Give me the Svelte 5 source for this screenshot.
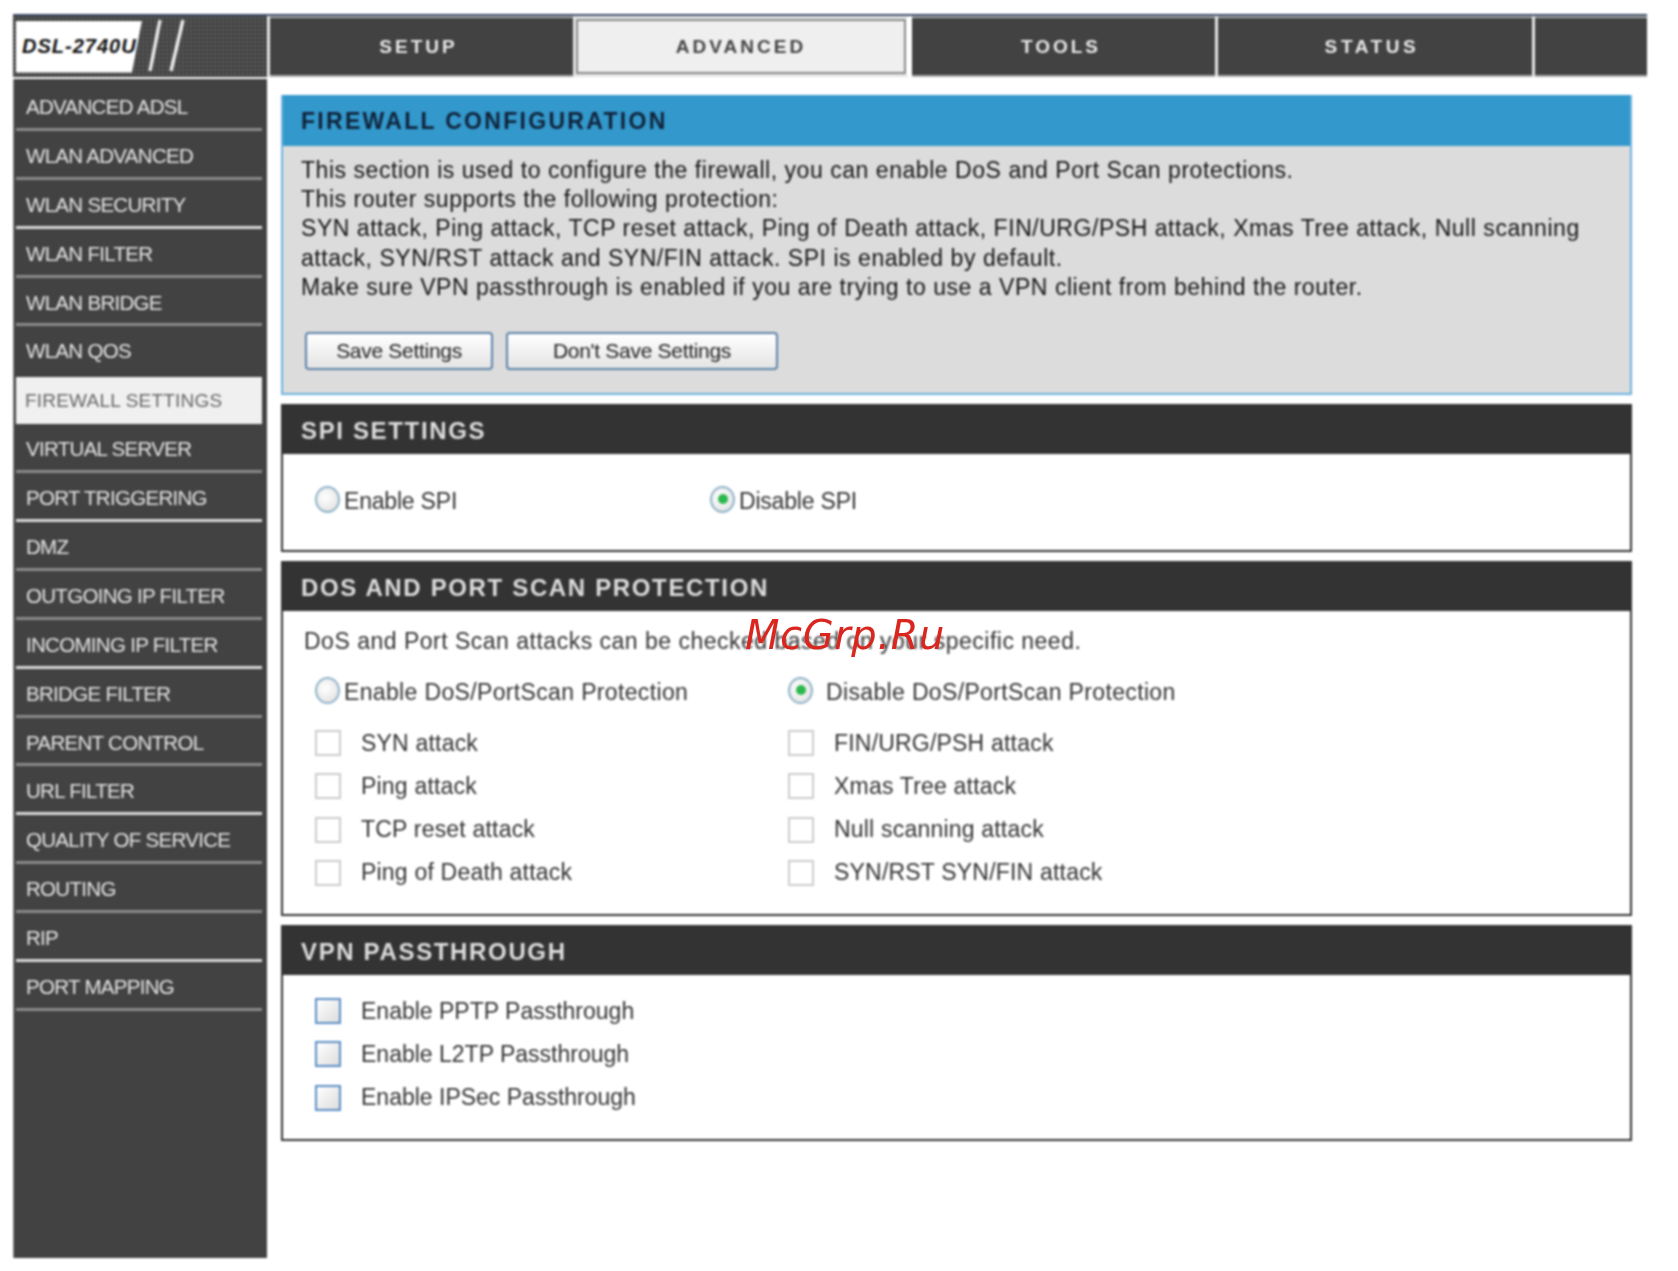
<script>
  const tabs = [
    { label: 'SETUP', cls: 't-setup' },
    { label: 'ADVANCED', cls: 't-adv', active: true },
    { label: 'TOOLS', cls: 't-tools' },
    { label: 'STATUS', cls: 't-status' },
    { label: '', cls: 't-end' }
  ];
  const menu = ['ADVANCED ADSL','WLAN ADVANCED','WLAN SECURITY','WLAN FILTER','WLAN BRIDGE','WLAN QOS','FIREWALL SETTINGS','VIRTUAL SERVER','PORT TRIGGERING','DMZ','OUTGOING IP FILTER','INCOMING IP FILTER','BRIDGE FILTER','PARENT CONTROL','URL FILTER','QUALITY OF SERVICE','ROUTING','RIP','PORT MAPPING'];
  const attacks = [
    ['SYN attack','FIN/URG/PSH attack'],
    ['Ping attack','Xmas Tree attack'],
    ['TCP reset attack','Null scanning attack'],
    ['Ping of Death attack','SYN/RST SYN/FIN attack']
  ];
  const vpn = ['Enable PPTP Passthrough','Enable L2TP Passthrough','Enable IPSec Passthrough'];
</script>

<div class="shell">
  <div class="page">
    <header class="top">
      <div class="logo">
        <span class="model">DSL-2740U</span>
        <svg class="slashes" width="56" height="56" viewBox="0 0 56 56" aria-hidden="true">
          <path d="M16 1 L6 52 M39 1 L27 52" stroke="#ececec" stroke-width="3.4" fill="none"/>
        </svg>
      </div>
      {#each tabs as t}
        <div class="tab {t.cls}" class:active={t.active}>{t.label}</div>
      {/each}
    </header>

    <div class="main">
      <nav class="side">
        {#each menu as m}
          <div class="item" class:sel={m === 'FIREWALL SETTINGS'}>{m}</div>
        {/each}
      </nav>

      <main class="content">
        <section class="box intro">
          <h2 class="bluehead">FIREWALL CONFIGURATION</h2>
          <div class="introbody">
            <p>This section is used to configure the firewall, you can enable DoS and Port Scan protections.</p>
            <p>This router supports the following protection:</p>
            <p>SYN attack, Ping attack, TCP reset attack, Ping of Death attack, FIN/URG/PSH attack, Xmas Tree attack, Null scanning<br>attack, SYN/RST attack and SYN/FIN attack. SPI is enabled by default.</p>
            <p>Make sure VPN passthrough is enabled if you are trying to use a VPN client from behind the router.</p>
            <div class="btns">
              <button class="b1">Save Settings</button>
              <button class="b2">Don't Save Settings</button>
            </div>
          </div>
        </section>

        <section class="box spi">
          <h2 class="darkhead">SPI SETTINGS</h2>
          <div class="spirow">
            <label class="opt o1"><span class="radio"></span>Enable SPI</label>
            <label class="opt"><span class="radio on"></span>Disable SPI</label>
          </div>
        </section>

        <section class="box dos">
          <h2 class="darkhead">DOS AND PORT SCAN PROTECTION</h2>
          <p class="lead">DoS and Port Scan attacks can be checked based on your specific need.</p>
          <div class="grid radios">
            <label class="opt wide"><span class="radio"></span>Enable DoS/PortScan Protection</label>
            <label class="opt wide o-dis"><span class="radio on"></span>Disable DoS/PortScan Protection</label>
          </div>
          <div class="grid checks">
            {#each attacks as row}
              {#each row as a}
                <label class="chk"><span class="box-c"></span>{a}</label>
              {/each}
            {/each}
          </div>
        </section>

        <section class="box vpn">
          <h2 class="darkhead">VPN PASSTHROUGH</h2>
          <div class="vpnlist">
            {#each vpn as v}
              <label class="chk"><span class="box-c blue"></span>{v}</label>
            {/each}
          </div>
        </section>
      </main>
    </div>
  </div>
  <div class="mark">McGrp.Ru</div>
</div>

<style>
  :global(body) { margin: 0; background: #fff; }
  .shell { position: relative; width: 1678px; height: 1271px; overflow: hidden; font-family: "Liberation Sans", Arial, sans-serif; }
  .page { padding: 14px 31px 0 13px; filter: blur(0.8px); color: #222; }

  .top { display: flex; height: 63px; background: #424242; border-top: 2px solid #3c4a66; box-sizing: border-box; box-shadow: inset 0 2px 0 #aaa, inset 0 -2px 0 #aaa; }
  .logo { position: relative; width: 254px; flex: none; display: flex; align-items: center; padding: 4px 0 4px 3px; box-sizing: border-box;
    background-image: radial-gradient(#666 1px, transparent 1.2px); background-size: 4px 4px; background-color: #424242; }
  .model { display: flex; align-items: center; width: 126px; height: 52px; padding-left: 6px; box-sizing: border-box; background: #fff; color: #111; font: italic bold 20px "Liberation Sans", sans-serif; letter-spacing: 1px; white-space: nowrap;
    clip-path: polygon(0 0, 100% 0, 92% 100%, 0 100%); }
  .slashes { margin-left: 2px; }
  .tab { border-left: 3px solid #e6e6e6; display: flex; align-items: center; justify-content: center; color: #e8e8e8; font-size: 19px; font-weight: 700; letter-spacing: 3px; box-sizing: border-box; flex: none; }
  .t-setup { width: 306px; padding-right: 6px; }
  .t-adv { width: 336px; background: #efefef; color: #444; border: 3px solid #e6e6e6; border-right-color: #fff; box-shadow: inset 0 0 0 2px #888; }
  .t-tools { width: 306px; border-left-color: #fff; padding-right: 5px; }
  .t-status { width: 317px; padding-right: 6px; letter-spacing: 3.6px; }
  .t-end { flex: 1; }

  .main { display: flex; margin-top: 2px; }
  .side { width: 254px; height: 1179px; background: #424242; flex: none; box-sizing: border-box; padding: 3px 5px 0 3px; box-shadow: inset 1px 0 0 #888; }
  .item { height: 48.9px; box-sizing: border-box; border-bottom: 3px solid #8a8a8a; color: #e4e4e4; font-size: 20.5px; line-height: 49px; padding-left: 10px; letter-spacing: -0.7px; white-space: nowrap; }
  .item:nth-child(3n) { border-bottom-color: #d8d8d8; }
  .item:has(+ .sel) { border-bottom-color: transparent; }
  .item.sel { background: #f0f0f0; color: #666; border-bottom: 0; height: 46.9px; margin: 2px 0 0; line-height: 48px; letter-spacing: 0.2px; font-size: 19px; padding-left: 9px; }

  .content { flex: 1; padding: 16px 15px 0 14px; display: flex; flex-direction: column; gap: 10px; min-width: 0; }
  .box { box-sizing: border-box; margin: 0; background: #fff; border: 2px solid #333; border-top: 0; }
  .darkhead { margin: 0 -2px; height: 50px; background: #333; padding-left: 20px; color: #ddd; font-size: 24px; font-weight: 700; line-height: 53px; letter-spacing: 1.65px; }
  .bluehead { margin: 0; height: 51px; background: #3398cc; padding-left: 18px; color: #10233a; font-size: 23px; font-weight: 700; line-height: 53px; letter-spacing: 2.3px; }

  .intro { height: 300px; background: #dcdcdc; border: 2px solid #6cb4e0; border-top: 0; }
  .introbody { padding: 10px 18px 0; font-size: 23px; color: #151515; letter-spacing: 0.54px; }
  .introbody p { margin: 0; line-height: 29.2px; white-space: nowrap; }
  .btns { display: flex; gap: 13px; margin: 30px 0 0 4px; letter-spacing: 0; }
  button { height: 38px; box-sizing: border-box; border: 2px solid #5e83a8; border-radius: 4px; background: linear-gradient(#fff, #e4e4e4); color: #222; font: 21px "Liberation Sans", sans-serif; letter-spacing: -0.3px; padding: 0; }
  .b1 { width: 188px; } .b2 { width: 272px; }

  .spi { height: 148px; margin-top: -1px; }
  .spirow { display: flex; padding: 32px 0 0 32px; }
  .o1 { width: 395px; }
  .dos { height: 355px; margin-top: -1px; }
  .vpn { height: 216px; margin-top: -1px; }

  .opt { display: flex; align-items: center; font-size: 23px; letter-spacing: -0.2px; color: #333; white-space: nowrap; height: 30px; }
  .opt.wide { letter-spacing: 0.35px; }
  .radio { width: 25px; height: 27px; border-radius: 50%; border: 2px solid #8fb3c8; box-sizing: border-box; background: radial-gradient(circle at 40% 40%, #fff, #ddd); position: relative; flex: none; margin: -4px 4px 0 0; }
  .radio.on::after { content: ""; position: absolute; left: 50%; top: 50%; width: 10px; height: 10px; transform: translate(-50%, -50%); border-radius: 50%; background: #2cb84e; }

  .lead { margin: 0; padding: 15px 0 0 21px; font-size: 23px; line-height: 30px; color: #333; letter-spacing: 0.5px; white-space: nowrap; }
  .grid { display: grid; grid-template-columns: 473px 1fr; padding-left: 32px; }
  .radios { margin-top: 21px; }
  .o-dis { gap: 13px; }
  .o-dis .radio { margin-right: 0; }
  .checks { margin-top: 23px; row-gap: 17.3px; }
  .chk { display: flex; align-items: center; height: 26px; font-size: 23px; color: #333; letter-spacing: 0.2px; white-space: nowrap; }
  .checks .chk { padding-top: 0; }
  .box-c { width: 26px; height: 26px; box-sizing: border-box; border: 2px solid #ccc; background: #fff; margin-right: 20px; flex: none; }
  .box-c.blue { border: 2px solid #5a8fc4; background: linear-gradient(135deg, #fff, #ddd); }
  .vpnlist { display: flex; flex-direction: column; gap: 17.3px; padding: 23px 0 0 32px; }
  .vpnlist .chk { letter-spacing: 0; }

  .mark { position: absolute; left: 745px; top: 612px; color: #d9261f; font: italic 40px "DejaVu Sans", sans-serif; letter-spacing: 0.6px; white-space: nowrap; }
</style>
